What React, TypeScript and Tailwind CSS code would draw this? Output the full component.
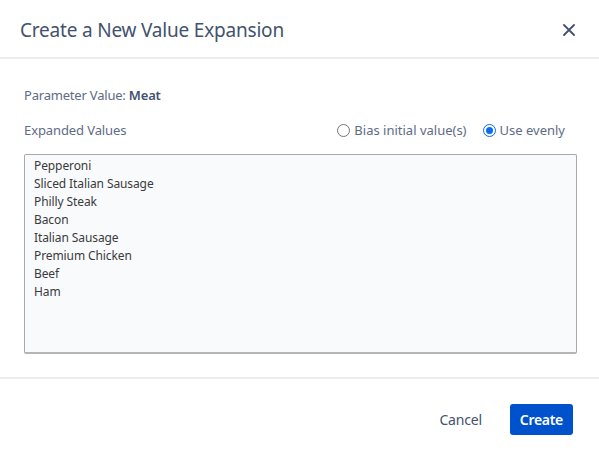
const values = [
  'Pepperoni',
  'Sliced Italian Sausage',
  'Philly Steak',
  'Bacon',
  'Italian Sausage',
  'Premium Chicken',
  'Beef',
  'Ham',
];

export default function App() {
  return (
    <div className="w-[599px] h-[456px] bg-white flex flex-col font-['Noto_Sans',sans-serif]">
      {/* Header */}
      <div className="h-[59px] flex items-center justify-between pl-[20px] pr-[24px] pt-[3px] border-b-2 border-[#ebecf0]">
        <h2 className="text-[19px] text-[#42526e] tracking-[-0.2px]">Create a New Value Expansion</h2>
        <button className="text-[#42526e]">
          <svg width="12" height="12" viewBox="0 0 12 12">
            <path d="M1 1 L11 11 M11 1 L1 11" stroke="currentColor" strokeWidth="1.8" strokeLinecap="round" />
          </svg>
        </button>
      </div>

      {/* Body */}
      <div className="flex-1 flex flex-col px-[24px] pt-[27px]">
        <div className="text-[13px] text-[#5e6c84] tracking-[-0.2px]">
          Parameter Value: <span className="font-semibold text-[#42526e]">Meat</span>
        </div>
        <div className="flex items-center justify-between mt-[15px] pr-[10px]">
          <span className="text-[13px] text-[#5e6c84] tracking-[-0.1px]">Expanded Values</span>
          <div className="flex items-center gap-[16px] text-[13px] text-[#5e6c84]">
            <label className="flex items-center gap-[4px]">
              <span className="w-[13px] h-[13px] rounded-full border border-[#767676] bg-white" />
              Bias initial value(s)
            </label>
            <label className="flex items-center gap-[4px]">
              <span className="w-[13px] h-[13px] rounded-full border-[1.5px] border-[#0b6cf0] bg-white flex items-center justify-center">
                <span className="w-[7px] h-[7px] rounded-full bg-[#0b6cf0]" />
              </span>
              Use evenly
            </label>
          </div>
        </div>
        <div className="mt-[14px] h-[200px] w-[553px] bg-[#f9fafc] border border-[#a9a9a9] border-b-2 border-b-[#b5b5b5] rounded-[2px] px-[9px] pt-[2px]">
          {values.map((v) => (
            <div key={v} className="text-[12px] leading-[18px] text-[#3b3b3b] tracking-[-0.1px]">
              {v}
            </div>
          ))}
        </div>
      </div>

      {/* Footer */}
      <div className="h-[79px] border-t-2 border-[#ebecf0] flex items-center justify-end gap-[28px] pr-[26px] pt-[3px]">
        <button className="text-[14px] text-[#42526e] tracking-[-0.2px]">Cancel</button>
        <button className="h-[31px] px-[10px] rounded-[3px] bg-[#0052cc] text-white text-[14px] font-semibold tracking-[-0.3px]">
          Create
        </button>
      </div>
    </div>
  );
}
